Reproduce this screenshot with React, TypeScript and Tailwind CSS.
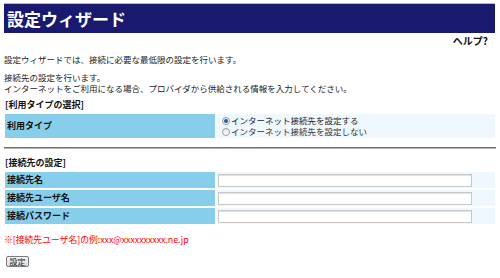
import React from "react"

function Radio({ checked }: { checked?: boolean }) {
  return (
    <span className="relative inline-flex w-[8px] h-[8px] shrink-0 items-center justify-center rounded-full border border-[#9a9a9a] bg-gradient-to-b from-[#e6e6e6] to-white mr-[1px]">
      {checked && <span className="w-[4px] h-[4px] rounded-full bg-[#1d5fae]" />}
    </span>
  )
}

function InputRow({ label }: { label: string }) {
  return (
    <div className="flex gap-[2px] h-[16px]">
      <div className="w-[210px] bg-[#87ceeb] flex items-center pl-[2px] font-bold text-[9px] text-[#111]">{label}</div>
      <div className="flex-1 bg-[#f0f8ff] flex items-center">
        <div className="ml-[1px] w-[254px] h-[13px] bg-white border border-[#c8c8c8] shadow-[inset_0_1px_0_#e2e2e2]" />
      </div>
    </div>
  )
}

export default function App() {
  return (
    <div className="w-[500px] h-[278px] overflow-hidden bg-white text-[#222] text-[8.5px] leading-[10px] font-['Noto_Sans_CJK_JP',sans-serif]">
      {/* ヘッダー */}
      <div className="pt-[3px] pl-[4px] pr-[5px]">
        <div className="h-[30px] bg-[#191970] border-t border-[#b8b8c8] flex items-center pl-[3px] text-white text-[17px] font-bold leading-none">
          設定ウィザード
        </div>
      </div>

      <div className="mt-[3px] h-[10px] pr-[12px] text-right font-bold text-[10px] leading-[10px] text-[#111]">ヘルプ?</div>

      <div className="pl-[4px]">
        <p className="mt-[8px]">設定ウィザードでは、接続に必要な最低限の設定を行います。</p>
        <p className="mt-[8px] leading-[10.5px]">接続先の設定を行います。</p>
        <p className="leading-[10.5px]">インターネットをご利用になる場合、プロバイダから供給される情報を入力してください。</p>
      </div>

      {/* 利用タイプ */}
      <div className="mt-[7px] pl-[5px] font-bold text-[9px] text-[#111]">[利用タイプの選択]</div>
      <div className="mt-[4px] px-[5px]">
        <div className="flex gap-[2px] h-[24px]">
          <div className="w-[210px] bg-[#87ceeb] flex items-center pl-[2px] font-bold text-[9px] text-[#111]">利用タイプ</div>
          <div className="flex-1 bg-[#f0f8ff] flex flex-col justify-center pl-[5px] leading-[11px]">
            <label className="flex items-center">
              <Radio checked />
              インターネット接続先を設定する
            </label>
            <label className="flex items-center text-[#333]">
              <Radio />
              インターネット接続先を設定しない
            </label>
          </div>
        </div>
      </div>

      <div className="mt-[9px] ml-[4px] mr-[4px] h-[2px] border-t border-[#6e6e6e] border-b border-b-[#b4b4b4]" />

      {/* 接続先 */}
      <div className="mt-[9px] pl-[5px] font-bold text-[9px] text-[#111]">[接続先の設定]</div>
      <div className="mt-[4px] px-[5px] flex flex-col gap-[2px]">
        <InputRow label="接続先名" />
        <InputRow label="接続先ユーザ名" />
        <InputRow label="接続パスワード" />
      </div>

      <p className="mt-[11px] pl-[4px] text-[8.8px] text-[#ff0000]">※[接続先ユーザ名]の例:xxx@xxxxxxxxxx.ne.jp</p>

      <div className="mt-[11px] pl-[6px]">
        <button className="w-[23px] h-[11px] flex items-center justify-center text-[8px] leading-none text-[#222] border border-[#7a7a7a] rounded-[2px] bg-gradient-to-b from-[#f6f6f6] to-[#dcdcdc]">
          設定
        </button>
      </div>
    </div>
  )
}
